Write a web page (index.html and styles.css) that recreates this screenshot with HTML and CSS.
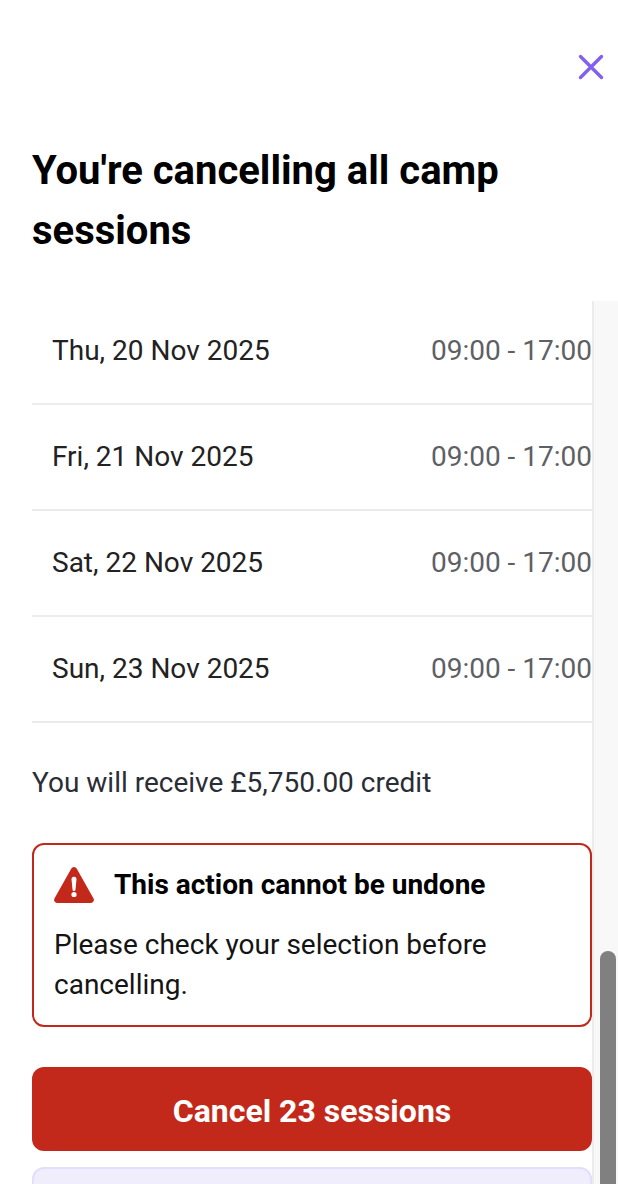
FILE: index.html
```html
<!DOCTYPE html>
<html lang="en">
<head>
  <meta charset="UTF-8">
  <meta name="viewport" content="width=device-width, initial-scale=1.0">
  <title>Cancel sessions</title>
  <link rel="stylesheet" href="styles.css">
</head>
<body>
  <div class="modal">
    <div class="modal-header">
      <div class="close-row">
        <button class="close-btn" aria-label="Close">
          <svg width="28" height="28" viewBox="0 0 28 28" fill="none" stroke="#8261f0" stroke-width="3.4" stroke-linecap="round">
            <path d="M3.5 3.500L24.500 24.500M24.500 3.500L3.500 24.500"/>
          </svg>
        </button>
      </div>
      <h1>You're cancelling all camp sessions</h1>
    </div>
    <div class="scroll-area">
      <div class="content">
        <ul class="session-list">
          <li class="session"><span>Thu, 20 Nov 2025</span><span class="time">09:00 - 17:00</span></li>
          <li class="session"><span>Fri, 21 Nov 2025</span><span class="time">09:00 - 17:00</span></li>
          <li class="session"><span>Sat, 22 Nov 2025</span><span class="time">09:00 - 17:00</span></li>
          <li class="session"><span>Sun, 23 Nov 2025</span><span class="time">09:00 - 17:00</span></li>
        </ul>
        <p class="credit">You will receive £5,750.00 credit</p>
        <div class="alert">
          <div class="alert-title">
            <svg class="alert-icon" width="40" height="36" viewBox="0 0 40 36">
              <path fill="#c3291b" d="M17.200 1.700a3.200 3.200 0 0 1 5.600 0l16.600 29.600a3.100 3.100 0 0 1-2.800 4.700H3.400a3.100 3.100 0 0 1-2.800-4.700z"/>
              <path fill="#fff" d="M17.500 12.200a2.500 2.500 0 0 1 5 0l-1 10.300a1.500 1.500 0 0 1-3 0z"/>
              <circle fill="#fff" cx="20" cy="27.500" r="2.600"/>
            </svg>
            <strong>This action cannot be undone</strong>
          </div>
          <p>Please check your selection before cancelling.</p>
        </div>
        <button class="cancel-btn">Cancel 23 sessions</button>
        <div class="note"></div>
      </div>
      <div class="scroll-track">
        <div class="scroll-thumb"></div>
      </div>
    </div>
  </div>
</body>
</html>
```

FILE: styles.css
```css
html, body {
  height: 100%;
}
body {
  margin: 0;
  font-family: Roboto, "Liberation Sans", sans-serif;
  background-color: white;
  color: #141414;
  overflow: hidden;
}
.modal {
  display: flex;
  flex-direction: column;
  height: 1184px;
}
.modal-header {
  height: 301px;
  padding: 53px 0 0 32px;
  box-sizing: border-box;
  flex-shrink: 0;
}
.close-row {
  display: flex;
  justify-content: flex-end;
  padding-right: 13px;
}
.close-btn {
  padding: 0;
  border: none;
  background: none;
  height: 28px;
  cursor: pointer;
}
.close-btn svg {
  display: block;
}
h1 {
  margin: 60px 0 0;
  width: 520px;
  font-size: 40px;
  line-height: 60px;
  font-weight: 700;
  color: black;
}
.scroll-area {
  flex: 1;
  display: flex;
  min-height: 0;
  overflow: hidden;
}
.content {
  width: 560px;
  margin-left: 32px;
  flex-shrink: 0;
}
.session-list {
  list-style: none;
  margin: -2px 0 0;
  padding: 0;
}
.session {
  display: flex;
  justify-content: space-between;
  align-items: center;
  height: 106px;
  box-sizing: border-box;
  padding: 0 0 2px 20px;
  border-bottom: 2px solid #ececec;
  font-size: 28px;
  color: #222;
}
.time {
  color: #5f5f66;
}
.credit {
  margin: 40px 0 0;
  font-size: 28px;
  line-height: 40px;
  color: #2b2d36;
}
.alert {
  margin-top: 40px;
  height: 184px;
  box-sizing: border-box;
  padding: 22px 20px 0;
  border: 2px solid #c3291b;
  border-radius: 12px;
}
.alert-title {
  display: flex;
  align-items: center;
  gap: 20px;
  height: 36px;
  font-size: 28px;
  line-height: 34px;
  color: black;
}
.alert-title strong {
  font-weight: 700;
}
.alert p {
  margin: 22px 0 0;
  font-size: 28px;
  line-height: 40px;
}
.cancel-btn {
  display: block;
  width: 100%;
  height: 84px;
  margin-top: 40px;
  padding: 4px 0 0;
  border: none;
  border-radius: 12px;
  background-color: #c3291b;
  color: white;
  font-family: inherit;
  font-size: 32px;
  font-weight: 700;
  cursor: pointer;
}
.note {
  height: 80px;
  margin-top: 16px;
  box-sizing: border-box;
  border: 2px solid #e3def9;
  border-radius: 12px;
  background-color: #f0edfc;
}
.scroll-track {
  flex: 1;
  box-sizing: border-box;
  padding: 650px 2px 0 6px;
  background-color: #f8f8f8;
  border-left: 2px solid #ececec;
}
.scroll-thumb {
  height: 400px;
  border-radius: 8px;
  background-color: #808080;
}
```
